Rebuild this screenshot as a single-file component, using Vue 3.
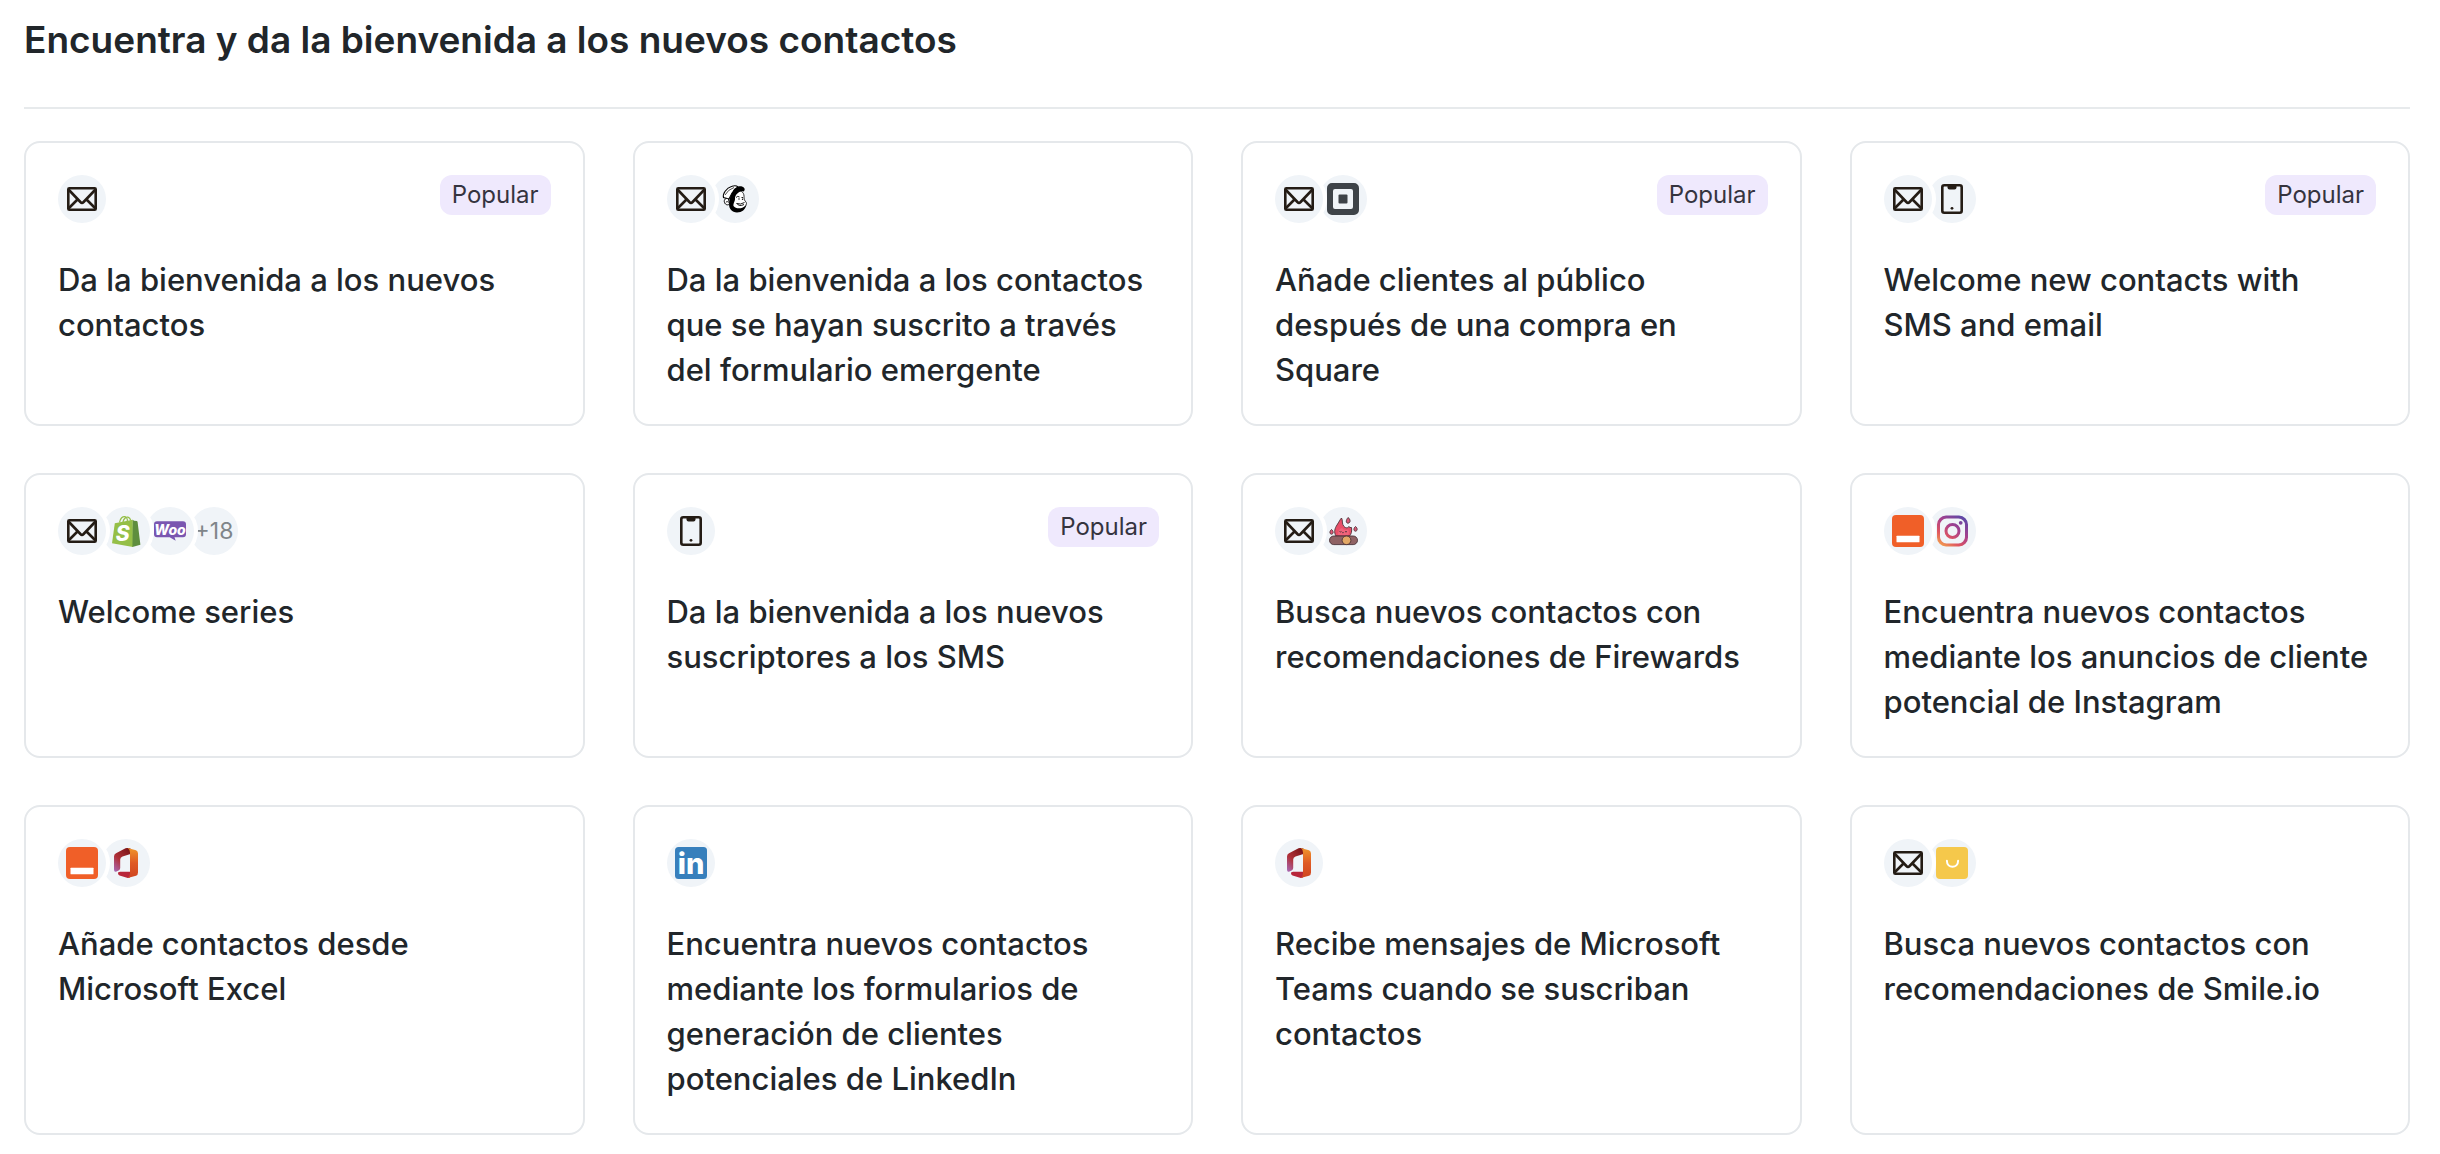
<script setup>
const cards = [
  { title: 'Da la bienvenida a los nuevos contactos', icons: ['mail'], popular: true },
  { title: 'Da la bienvenida a los contactos que se hayan suscrito a través del formulario emergente', icons: ['mail', 'mailchimp'] },
  { title: 'Añade clientes al público después de una compra en Square', icons: ['mail', 'square'], popular: true },
  { title: 'Welcome new contacts with SMS and email', icons: ['mail', 'phone'], popular: true },
  { title: 'Welcome series', icons: ['mail', 'shopify', 'woo'], more: '+18' },
  { title: 'Da la bienvenida a los nuevos suscriptores a los SMS', icons: ['phone'], popular: true },
  { title: 'Busca nuevos contactos con recomendaciones de Firewards', icons: ['mail', 'firewards'] },
  { title: 'Encuentra nuevos contactos mediante los anuncios de cliente potencial de Instagram', icons: ['form', 'instagram'] },
  { title: 'Añade contactos desde Microsoft Excel', icons: ['form', 'office'] },
  { title: 'Encuentra nuevos contactos mediante los formularios de generación de clientes potenciales de LinkedIn', icons: ['linkedin'] },
  { title: 'Recibe mensajes de Microsoft Teams cuando se suscriban contactos', icons: ['office'] },
  { title: 'Busca nuevos contactos con recomendaciones de Smile.io', icons: ['mail', 'smile'] },
]
</script>

<template>
  <svg class="defs" aria-hidden="true">
    <defs>
      <linearGradient id="ig" x1="0.1" y1="1" x2="0.8" y2="0">
        <stop offset="0" stop-color="#f5a84c" />
        <stop offset="0.3" stop-color="#df5560" />
        <stop offset="0.6" stop-color="#a9408c" />
        <stop offset="1" stop-color="#5a48a8" />
      </linearGradient>
      <linearGradient id="office-right" x1="0" y1="0" x2="0" y2="1">
        <stop offset="0" stop-color="#f0962c" />
        <stop offset="0.5" stop-color="#df5a24" />
        <stop offset="1" stop-color="#cf4520" />
      </linearGradient>
      <linearGradient id="office-left" x1="0.8" y1="0" x2="0.1" y2="1">
        <stop offset="0" stop-color="#7c1519" />
        <stop offset="0.55" stop-color="#b03037" />
        <stop offset="1" stop-color="#a867b0" />
      </linearGradient>
    </defs>
  </svg>
  <main class="page">
    <h1 class="heading">Encuentra y da la bienvenida a los nuevos contactos</h1>
    <ul class="grid">
      <li v-for="card in cards" :key="card.title" class="cell">
        <a class="card" href="#">
          <div class="top">
            <div class="icons">
              <span v-for="icon in card.icons" :key="icon" class="bubble">
                <svg v-if="icon === 'mail'" viewBox="0 0 48 48" fill="none" stroke="#241c15" stroke-width="2.6" stroke-linejoin="round">
                  <rect x="10.3" y="13.3" width="27.4" height="21.4" rx="1" />
                  <path d="M10.5 14.5 22.4 27Q24 28.6 25.6 27L37.5 14.5M10.5 33.5 19 25M37.5 33.5 29 25" />
                </svg>
                <svg v-else-if="icon === 'phone'" viewBox="0 0 48 48">
                  <rect x="14.3" y="10.3" width="19.4" height="27.4" rx="2" fill="none" stroke="#241c15" stroke-width="2.6" />
                  <path d="M19.5 10h9v2.5a2 2 0 0 1-2 2h-5a2 2 0 0 1-2-2z" fill="#241c15" />
                  <circle cx="24" cy="33.3" r="1.4" fill="#241c15" />
                </svg>
                <svg v-else-if="icon === 'square'" viewBox="0 0 48 48">
                  <path fill="#3e4348" fill-rule="evenodd" d="M13 8h22a5 5 0 0 1 5 5v22a5 5 0 0 1-5 5H13a5 5 0 0 1-5-5V13a5 5 0 0 1 5-5zM16 14a2 2 0 0 0-2 2v16a2 2 0 0 0 2 2h16a2 2 0 0 0 2-2V16a2 2 0 0 0-2-2z" />
                  <rect x="19.5" y="19.5" width="9" height="9" rx="1" fill="#3e4348" />
                </svg>
                <svg v-else-if="icon === 'mailchimp'" viewBox="0 0 48 48">
                  <path d="M21 20C18 25 18 32 23.500 34 28 36 34.500 34 35.500 28.500 35.500 26.500 33 26 33 23 33.500 18 31 15.500 27 16z" fill="#fff" stroke="#000" stroke-width="0.8" />
                  <path d="M18 29C18 34 21 37.400 26 37.400 31 37.400 34.500 34.500 35.300 30 32 34 25 34.500 22.500 31 22 28 24.500 26 24 22.500 25 18 30 16 31.500 15.500L29 13 20 18z" fill="#000" />
                  <path d="M12.500 22.500C11.500 19 15 13 21 11.300 24 10.300 26 11 27 12L21 18 18 24z" fill="#fff" stroke="#000" stroke-width="1.1" />
                  <path d="M14 20Q17 14.500 23 12.500" fill="none" stroke="#000" stroke-width="0.7" />
                  <path d="M21.500 17.500C22 13 28 10.500 31 11.500 34 12.500 34.500 15 32.500 16.500 29 15.500 25 15.500 21.500 17.500z" fill="#000" />
                  <path d="M17.500 24C15 22.500 12.500 24.500 13.500 27.500 14.500 30 17 30.500 18.500 29z" fill="#fff" stroke="#000" stroke-width="1" />
                  <path d="M15.200 27.500Q15.800 25 17.200 27.500M25 22.500Q26.500 20.500 28.500 22M30.500 22.500h1.500M25.500 28.500Q29.500 30 33.500 27.500M26 28.500Q28 32 33 29.500" fill="none" stroke="#000" stroke-width="0.9" />
                  <circle cx="28" cy="24" r="0.7" />
                  <circle cx="31.500" cy="24.200" r="0.7" />
                </svg>
                <svg v-else-if="icon === 'shopify'" viewBox="0 0 48 48">
                  <path d="M17.500 15.500C18 11.500 21 9 23 9.700 25 10.500 25.500 13 25.300 14M21 15C21.500 12 24 9.700 26 10.200 28 10.700 28.500 12.500 28.800 13.500" fill="none" stroke="#95bf47" stroke-width="1.3" />
                  <path d="M12.800 16.200 30.800 12.800 31 40 10 36.200z" fill="#95bf47" />
                  <path d="M30.800 12.800 32 13.700 35 14.100 35.600 15 38.400 37.700 30.400 40z" fill="#5e8e3e" />
                  <text x="13.800" y="34" font-family="Inter, sans-serif" font-size="21" font-weight="800" font-style="italic" fill="#fff">S</text>
                </svg>
                <svg v-else-if="icon === 'woo'" viewBox="0 0 48 48">
                  <path d="M11 14.300h26a3 3 0 0 1 3 3v10a3 3 0 0 1-3 3h-8.500l1.200 3.500-6-3.500H11a3 3 0 0 1-3-3v-10a3 3 0 0 1 3-3z" fill="#7a56b0" />
                  <text x="24" y="27.500" text-anchor="middle" font-family="Inter, sans-serif" font-size="14" font-weight="800" font-style="italic" fill="#fff">Woo</text>
                </svg>
                <svg v-else-if="icon === 'firewards'" viewBox="0 0 48 48" stroke="#4a3238" stroke-width="0.9">
                  <path d="M17 29C14.500 25 16 21 18 18 20 15 21 12.500 22.500 11 24 13 22.500 17 25 19.500 27 21.500 29 21 30 19.500Q30 21 32.500 20.500C33 24 32.500 27 30.500 29z" fill="#ea4f68" />
                  <path d="M19 28Q19 22 23 21 25 24 29 22.500 31 26 29 28.500z" fill="#f0637a" stroke="none" />
                  <path d="M20.500 24.500q1 .9 2 0M26 24.500q1 .9 2 0M23.200 25.500q.8.700 1.500 0" fill="none" />
                  <path d="M29 10.500C31.500 12 32 16 29 16.200 26.500 16 27 13 29 10.500zM12.500 22.500C14.700 24 14.700 27 12.500 27.200 10.300 27 10.500 24 12.500 22.500zM36.500 19.500C38.700 21 38.700 24 36.500 24.200 34.300 24 34.500 21 36.500 19.500z" fill="#dc5b78" />
                  <rect x="10.500" y="29" width="28" height="8.600" rx="4.300" fill="#8f6264" />
                  <ellipse cx="27.500" cy="33.300" rx="4.400" ry="4.300" fill="#e3a866" />
                </svg>
                <svg v-else-if="icon === 'form'" viewBox="0 0 48 48">
                  <rect x="8" y="8" width="32" height="32" rx="4" fill="#f05f28" />
                  <rect x="12.500" y="28.700" width="23" height="6.600" rx="0.5" fill="#fff" />
                </svg>
                <svg v-else-if="icon === 'instagram'" viewBox="0 0 48 48">
                  <path fill="url(#ig)" fill-rule="evenodd" d="M18 8.500h13a9 9 0 0 1 9 9v13a9 9 0 0 1-9 9H18a9 9 0 0 1-9-9v-13a9 9 0 0 1 9-9zm.5 3a6.500 6.500 0 0 0-6.500 6.500v12a6.500 6.500 0 0 0 6.500 6.500h12a6.500 6.500 0 0 0 6.500-6.500V18a6.500 6.500 0 0 0-6.500-6.500zM24.500 16a8 8 0 1 1 0 16 8 8 0 0 1 0-16zm0 3a5 5 0 1 0 0 10 5 5 0 0 0 0-10zM32.700 13.900a1.900 1.900 0 1 1 0 3.800 1.900 1.900 0 0 1 0-3.800z" />
                </svg>
                <svg v-else-if="icon === 'office'" viewBox="0 0 48 48">
                  <path d="M16 33.500 18 32.800H28V38.500L25.800 38.900 17.500 36.500Q15.500 35.500 16 33.500z" fill="#b8263a" />
                  <path d="M25.600 9 28.500 9.500V15L20.500 17.400Q18.200 18.300 18.200 20.500V29Q18.200 30.500 17 31.200L14.500 32.600Q12 33.500 12 30.500V17.500Q12 15.300 14 14.200L23.500 9.300Q24.500 8.800 25.600 9z" fill="url(#office-left)" />
                  <path d="M25.600 9 34 11.300Q36 12 36 14.500V33.500Q36 36 34 36.700L25.600 39Q28 38 28 34.500V13.500Q28 10 25.600 9z" fill="url(#office-right)" />
                </svg>
                <svg v-else-if="icon === 'linkedin'" viewBox="0 0 48 48">
                  <rect x="8" y="8" width="32" height="32" rx="3.500" fill="#377fbc" />
                  <text x="24" y="35.300" text-anchor="middle" font-family="Inter, sans-serif" font-size="29" font-weight="800" fill="#fff">in</text>
                </svg>
                <svg v-else viewBox="0 0 48 48">
                  <rect x="8" y="8" width="32" height="32" rx="4" fill="#f5c84b" />
                  <path d="M18.900 21.700c0 8 11.200 8 11.200 0" fill="none" stroke="#fff" stroke-width="2" stroke-linecap="round" />
                </svg>
              </span>
              <span v-if="card.more" class="bubble more">{{ card.more }}</span>
            </div>
            <span v-if="card.popular" class="badge">Popular</span>
          </div>
          <h2 class="title">{{ card.title }}</h2>
        </a>
      </li>
    </ul>
  </main>
</template>

<style>
body {
  background: #fff;
}
</style>

<style scoped>
.defs {
  position: absolute;
  width: 0;
  height: 0;
}
.page {
  padding: 16px 30px 20px 24px;
  font-family: Inter, "Liberation Sans", sans-serif;
  color: #21262a;
}
.heading {
  margin: 0;
  padding-bottom: 43px;
  border-bottom: 2px solid #e7eaec;
  font-size: 37px;
  line-height: 48px;
  font-weight: 600;
}
.grid {
  display: grid;
  grid-template-columns: repeat(4, minmax(0, 1fr));
  gap: 47px 48px;
  margin: 32px 0 0;
  padding: 0;
  list-style: none;
}
.cell {
  display: flex;
}
.card {
  flex: 1;
  min-width: 0;
  box-sizing: border-box;
  padding: 32px;
  border: 2px solid #e5e8eb;
  border-radius: 16px;
  color: inherit;
  text-decoration: none;
}
.top {
  display: flex;
  align-items: flex-start;
  justify-content: space-between;
  margin-bottom: 34px;
}
.icons {
  display: flex;
  isolation: isolate;
}
.bubble {
  position: relative;
  width: 48px;
  height: 48px;
  border-radius: 50%;
  background: #f0f4f8;
  box-shadow: 0 0 0 4px #fff;
}
.bubble + .bubble {
  margin-left: -4px;
}
.bubble:nth-child(1) {
  z-index: 4;
}
.bubble:nth-child(2) {
  z-index: 3;
}
.bubble:nth-child(3) {
  z-index: 2;
}
.bubble svg {
  display: block;
  width: 48px;
  height: 48px;
}
.more {
  display: flex;
  align-items: center;
  justify-content: center;
  font-size: 23px;
  color: #7f8589;
}
.badge {
  padding: 0 12px;
  border-radius: 12px;
  background: #efe9fd;
  font-size: 24px;
  line-height: 40px;
  color: #35343f;
}
.title {
  margin: 0;
  font-size: 31px;
  line-height: 45px;
  font-weight: 500;
}
</style>
